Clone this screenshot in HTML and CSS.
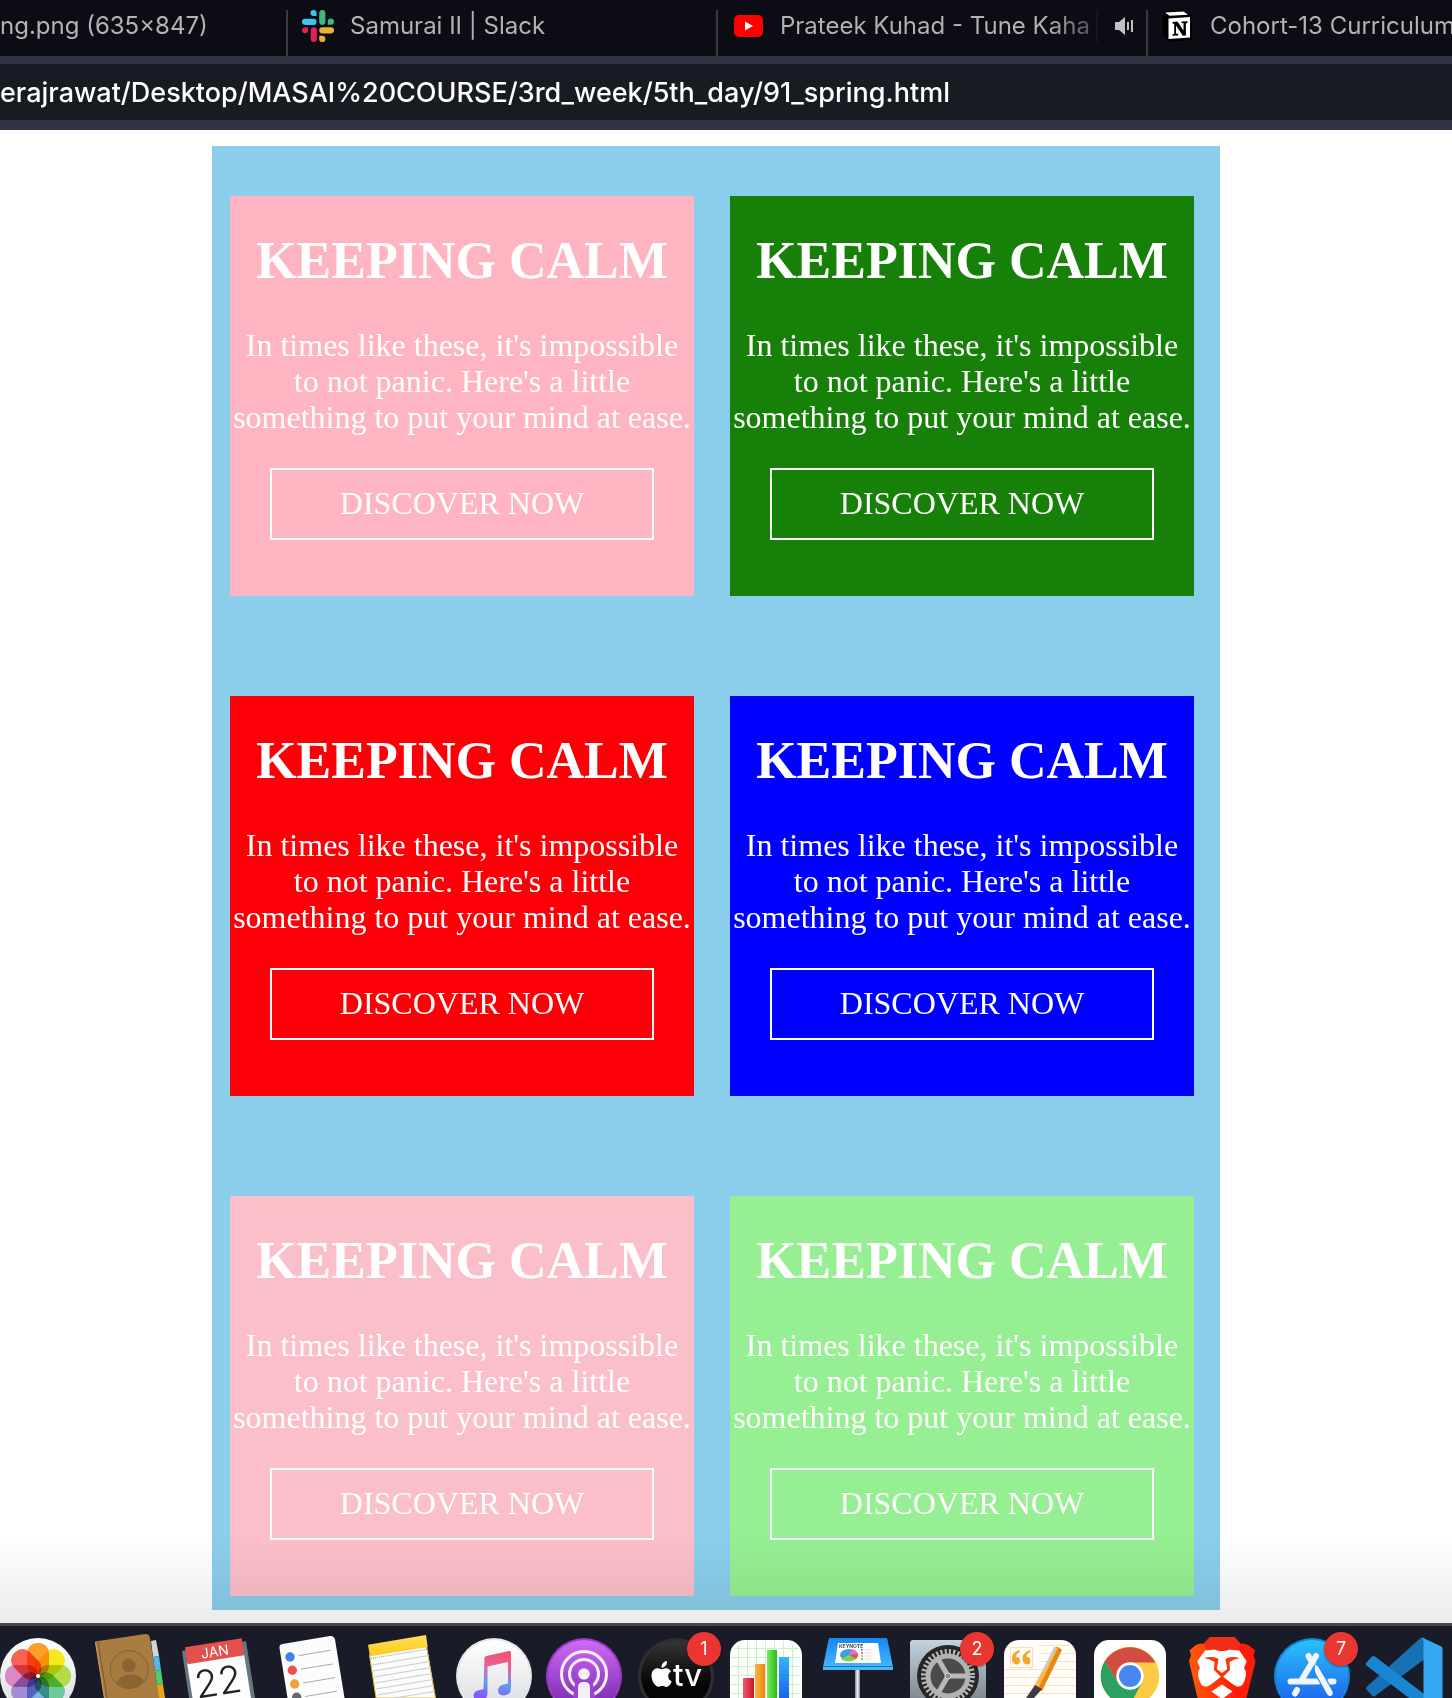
FILE: index.html
```html
<!DOCTYPE html>
<html lang="en">
<head>
<meta charset="utf-8">
<meta name="viewport" content="width=device-width, initial-scale=1">
<title>91_spring</title>
<link rel="stylesheet" href="styles.css">
</head>
<body>
<header class="browser">
  <nav class="tabs" aria-label="Open tabs">
    <a class="tab tab-first" href="#image"><span class="tab-title">ng.png (635×847)</span></a>
    <a class="tab" href="#slack">
      <svg class="tab-icon" viewBox="0 0 32 32" aria-hidden="true">
        <path fill="#3fc3f0" d="M11.500 0a3 3 0 0 1 3 3v3h-3a3 3 0 0 1 0-6zM3 8.700h8.500a3 3 0 0 1 0 6.200H3a3 3 0 0 1 0-6.200z"/>
        <path fill="#3cb883" d="M17.200 3a3 3 0 0 1 6.200 0v8.700a3 3 0 0 1-6.200 0zM32 11.700a3 3 0 0 1-3 3h-3.200v-3a3.100 3.100 0 0 1 6.200 0z"/>
        <path fill="#ebb22f" d="M29 17.200a3 3 0 0 1 0 6.200h-8.700a3 3 0 0 1 0-6.200zM20.300 32a3 3 0 0 1-3.100-3v-3.200h3.100a3.100 3.100 0 0 1 0 6.200z"/>
        <path fill="#e01e5a" d="M0 20.300a3 3 0 0 1 3-3.100h3.100v3.100a3.050 3.050 0 0 1-6.100 0zM8.700 20.300a3 3 0 0 1 6.200 0V29a3 3 0 0 1-6.200 0z"/>
      </svg>
      <span class="tab-title">Samurai II | Slack</span>
    </a>
    <a class="tab" href="#youtube">
      <svg class="tab-icon" viewBox="0 0 32 32" aria-hidden="true">
        <rect x="2" y="5" width="29" height="22" rx="5" fill="#fe0000"/>
        <path fill="#fff" d="M13 11.500l8 4.500-8 4.500z"/>
      </svg>
      <span class="tab-title tab-title-faded">Prateek Kuhad - Tune Kaha</span>
      <svg class="tab-sound" viewBox="0 0 20 20" aria-hidden="true">
        <path fill="#c0c1c4" d="M1 6h4l6-5v18l-6-5H1zM13 6h2v8h-2zM17 4h2v12h-2z"/>
      </svg>
    </a>
    <a class="tab tab-last" href="#notion">
      <svg class="tab-icon" viewBox="0 0 32 32" aria-hidden="true">
        <path fill="#000" d="M1 1.500L22 0l8 5v25l-23 1.500L1 24z"/>
        <path fill="#fff" d="M3 2.500L21.500 1.500 26 4.800 7.500 5.800zM6.500 8.500L28 7v20.500L6.500 29z"/>
        <path fill="#000" d="M10.500 12l5-.4 6 9v-7.300l-2-.4v-1.300l6-.4V13l-1.600.6v12l-3 .2-6.900-10.200v8l2.200.4v1.400l-5.700.4v-1.500l1.700-.6V13.800l-1.700-.3z"/>
      </svg>
      <span class="tab-title">Cohort-13 Curriculum</span>
    </a>
  </nav>
  <div class="toolbar">
    <input class="address" type="text" aria-label="Address" value="erajrawat/Desktop/MASAI%20COURSE/3rd_week/5th_day/91_spring.html">
  </div>
</header>

<main class="page">
  <div class="board">
    <section class="card card-rose"><h1>KEEPING CALM</h1><p>In times like these, it's impossible to not panic. Here's a little something to put your mind at ease.</p><button type="button">DISCOVER NOW</button></section>
    <section class="card card-green"><h1>KEEPING CALM</h1><p>In times like these, it's impossible to not panic. Here's a little something to put your mind at ease.</p><button type="button">DISCOVER NOW</button></section>
    <section class="card card-red"><h1>KEEPING CALM</h1><p>In times like these, it's impossible to not panic. Here's a little something to put your mind at ease.</p><button type="button">DISCOVER NOW</button></section>
    <section class="card card-blue"><h1>KEEPING CALM</h1><p>In times like these, it's impossible to not panic. Here's a little something to put your mind at ease.</p><button type="button">DISCOVER NOW</button></section>
    <section class="card card-pink"><h1>KEEPING CALM</h1><p>In times like these, it's impossible to not panic. Here's a little something to put your mind at ease.</p><button type="button">DISCOVER NOW</button></section>
    <section class="card card-mint"><h1>KEEPING CALM</h1><p>In times like these, it's impossible to not panic. Here's a little something to put your mind at ease.</p><button type="button">DISCOVER NOW</button></section>
  </div>
</main>

<footer class="dock">
  <!-- Photos -->
  <div class="app"><svg viewBox="0 0 76 72" aria-hidden="true">
    <defs><linearGradient id="disc" x2="0" y2="1"><stop stop-color="#fff"/><stop offset="1" stop-color="#d9dde1"/></linearGradient></defs>
    <circle cx="38" cy="50" r="38" fill="url(#disc)"/>
    <g class="petals">
      <rect x="27" y="17" width="22" height="33" rx="10" fill="#fb9f28"/>
      <rect x="27" y="17" width="22" height="33" rx="10" fill="#f8e71c" transform="rotate(45 38 50)"/>
      <rect x="27" y="17" width="22" height="33" rx="10" fill="#b2dc48" transform="rotate(90 38 50)"/>
      <rect x="27" y="17" width="22" height="33" rx="10" fill="#6ccb98" transform="rotate(135 38 50)"/>
      <rect x="27" y="17" width="22" height="33" rx="10" fill="#7fb0e6" transform="rotate(180 38 50)"/>
      <rect x="27" y="17" width="22" height="33" rx="10" fill="#a48cd2" transform="rotate(225 38 50)"/>
      <rect x="27" y="17" width="22" height="33" rx="10" fill="#d88bc0" transform="rotate(270 38 50)"/>
      <rect x="27" y="17" width="22" height="33" rx="10" fill="#fa6254" transform="rotate(315 38 50)"/>
    </g>
    <circle cx="38" cy="50" r="2" fill="#fff"/>
  </svg></div>
  <!-- Contacts -->
  <div class="app"><svg viewBox="0 0 76 72" aria-hidden="true">
    <path fill="#d3d5d8" d="M60 15l5-1 3 16-6 1z"/><path fill="#55b7e6" d="M62 31l6-1 2 14-6 1z"/><path fill="#4fcf62" d="M64 45l6-1 2 14-6 1z"/><path fill="#eaa11a" d="M66 59l6-1 2 14h-7z"/>
    <path fill="#a97c42" d="M4 15.500L54 8q4-.5 5 4l9 60H13z"/>
    <path fill="none" stroke="#7d5829" d="M7 16l9 56"/><path fill="none" stroke="#c99b5a" d="M4.500 16l9 56"/>
    <circle cx="38.300" cy="43.500" r="19" fill="#a67a40" stroke="#86612f"/>
    <circle cx="37.700" cy="39.500" r="6.800" fill="#8a6533"/><path fill="#8a6533" d="M25 57q4-8 14-8.500 9-.5 14 6-6 8-14 8t-14-5.500z"/>
  </svg></div>
  <!-- Calendar -->
  <div class="app"><svg viewBox="0 0 76 72" aria-hidden="true">
    <path fill="#687681" d="M0 25l4-1 8 48H7zM60 16l4-1 9 57h-6z"/>
    <path fill="#fdfdfd" d="M5 37l57-9 7 44H10.500z"/><path fill="#e4514d" d="M3 21.300l56.700-9 2.600 17-56.600 9z"/>
    <g transform="rotate(-9 34 30)" fill="#fff"><text class="cal-month" x="33.500" y="30.500" text-anchor="middle">JAN</text></g>
    <g transform="rotate(-9 38 68)"><text class="cal-day" x="38" y="69" text-anchor="middle">22</text></g>
  </svg></div>
  <!-- Reminders -->
  <div class="app"><svg viewBox="0 0 76 72" aria-hidden="true">
    <path fill="#fcfcfc" d="M6.500 22q-.5-3.500 3-4L57 10q4-.5 5 3.500L71.500 72H14.500z"/>
    <circle cx="17" cy="31" r="4.700" fill="#3f80f0"/><circle cx="19.300" cy="44.300" r="4.700" fill="#e9534b"/><circle cx="21.700" cy="58" r="4.700" fill="#eda03c"/><circle cx="23.700" cy="71.300" r="4.700" fill="#636a73"/>
    <path stroke="#aaa" d="M25.500 29.700l32-5.400M28 43l32-5M30 57l32-5.400M32 70.500l32-5.400"/>
  </svg></div>
  <!-- Notes -->
  <div class="app"><svg viewBox="0 0 76 72" aria-hidden="true">
    <path fill="#fcfcfa" stroke="#d8b93c" d="M5.500 29l57-9L71.500 72H12z"/>
    <defs><linearGradient id="notes" x2="0" y2="1"><stop stop-color="#ffe05a"/><stop offset="1" stop-color="#fbc91c"/></linearGradient></defs>
    <path fill="url(#notes)" d="M4 18.700L62 9l1.700 12L6 30.300z"/>
    <path stroke="#999" stroke-dasharray="1 1" d="M7 32.500l57-9.500"/>
    <path stroke="#c9cbd0" d="M8 39l57-9.500M9 45l57-9.500M10 51l57-9.500M11 57l57-9.500M12 63l57-9.500M13 69l57-9.500M25 73l45-7.500"/>
  </svg></div>
  <!-- Music -->
  <div class="app"><svg viewBox="0 0 76 72" aria-hidden="true">
    <defs><linearGradient id="note" gradientUnits="userSpaceOnUse" x1="46" y1="25" x2="38" y2="72"><stop stop-color="#f4506c"/><stop offset=".35" stop-color="#e8629a"/><stop offset=".7" stop-color="#5c9cf8"/><stop offset="1" stop-color="#8a58f5"/></linearGradient></defs>
    <circle cx="39" cy="50" r="38" fill="#e3e5e8"/><circle cx="39" cy="50" r="36" fill="url(#disc)"/>
    <path fill="url(#note)" d="M29.500 32q0-1.500 2-2L54 25q2-.3 2 1.500V62q0 7-7 7.500-6 0-6-5 0-5 6-6l4-1V36l-20.500 4.500V67q0 7-7 7.500-6.500.5-7-4.500 0-5 6-6l4-1z"/>
  </svg></div>
  <!-- Podcasts -->
  <div class="app"><svg viewBox="0 0 76 72" aria-hidden="true">
    <defs><linearGradient id="pod" x2="0" y2="1"><stop stop-color="#cf6af5"/><stop offset="1" stop-color="#7524ae"/></linearGradient></defs>
    <circle cx="38" cy="50" r="38" fill="#9939c6"/><circle cx="38" cy="50" r="36" fill="url(#pod)"/>
    <g fill="none" stroke="#f4f0f6" stroke-width="3"><circle cx="38" cy="48" r="22.500"/><circle cx="38" cy="48" r="14.500"/></g>
    <path fill="#a042d1" d="M29 58q2-6 9-6t9 6l2 14H27z"/>
    <circle cx="38" cy="48" r="5.800" fill="#f4f0f6"/><rect x="32" y="56" width="12" height="25" rx="5" fill="#f4f0f6"/>
  </svg></div>
  <!-- TV -->
  <div class="app"><svg viewBox="0 0 76 72" aria-hidden="true">
    <defs><linearGradient id="tv" x2="0" y2="1"><stop stop-color="#353535"/><stop offset=".6" stop-color="#060606"/></linearGradient></defs>
    <circle cx="39" cy="50" r="38" fill="#2f2f30"/><circle cx="39" cy="50" r="35" fill="url(#tv)"/>
    <path fill="#fff" d="M30 35q.3 3-1.600 5-1.800 2-4 1.800-.2-2.700 1.600-4.700 1.700-1.900 4-2.100zM34 45.500q-3 1.800-2.800 5 .2 3.500 3.500 4.800-2 5.200-5 5.600-1.400 0-2.600-.7-1.900-.8-3.800 0-1.500.8-2.700.5-5-2.500-6-9.500-.6-5.500 2.500-7.800 2.800-1.900 5.600-.6 2 .8 3.600 0 4.800-2 7.700 2.700z"/>
    <text class="tv-word" x="36" y="59.500">tv</text>
  </svg><span class="badge">1</span></div>
  <!-- Numbers -->
  <div class="app"><svg viewBox="0 0 76 72" aria-hidden="true">
    <defs>
      <linearGradient id="b1"><stop stop-color="#ef5a6a"/><stop offset="1" stop-color="#c41632"/></linearGradient><linearGradient id="b2"><stop stop-color="#fdb640"/><stop offset="1" stop-color="#e88410"/></linearGradient>
      <linearGradient id="b3"><stop stop-color="#7cea58"/><stop offset="1" stop-color="#25bb1e"/></linearGradient><linearGradient id="b4" x2="0" y2="1"><stop stop-color="#2eb8fa"/><stop offset="1" stop-color="#1c62ee"/></linearGradient>
    </defs>
    <rect x="2" y="14" width="72" height="72" rx="15" fill="#fdfffd"/>
    <path stroke="#c9f0c9" d="M10.500 19v53M19.500 15v57M28.500 15v57M37.500 15v57M46.500 15v57M55.500 15v57M64.500 18v54M6 22.500h64M3 31.500h70M3 40.500h70M3 49.500h70M3 58.500h70M3 67.500h70"/>
    <path fill="url(#b1)" d="M15 52h11v20H15z"/><path fill="url(#b2)" d="M27 38h10v34H27z"/><path fill="url(#b3)" d="M39 24h10v48H39z"/><path fill="url(#b4)" d="M51 31h10v41H51z"/>
  </svg></div>
  <!-- Keynote -->
  <div class="app"><svg viewBox="0 0 76 72" aria-hidden="true">
    <defs><linearGradient id="key" x2="0" y2="1"><stop stop-color="#1687f5"/><stop offset="1" stop-color="#4ab9fb"/></linearGradient><linearGradient id="pole"><stop stop-color="#7d858e"/><stop offset=".5" stop-color="#eef1f5"/><stop offset="1" stop-color="#7d858e"/></linearGradient></defs>
    <path fill="url(#pole)" d="M36 42h5v30h-5z"/><path fill="url(#key)" d="M11 12h56q1 0 1.300 1L74 41v3H4v-3l5.700-28q.3-1 1.300-1z"/><path fill="#1278b8" d="M4 40h70v1H4z"/>
    <path fill="#fff" d="M19 17h40l3 20H16z"/><text class="keynote-word" x="20" y="22">KEYNOTE</text>
    <ellipse cx="30" cy="29" rx="9" ry="6" fill="#3aa0ea"/><path fill="#e36ed2" d="M30 29l2-6q5 .5 7 5z"/><path fill="#ee5048" d="M30 29l9-1q0 3-2 5z"/><path fill="#83cf4c" d="M30 29l7 4q-8 5-15 0z"/>
    <path fill="#4aaee8" d="M42 23h2v2h-2z"/><path fill="#e36ed2" d="M42 26h2v2h-2z"/><path fill="#f5ba39" d="M42 29h2v2h-2z"/><path fill="#83cf4c" d="M42 32h2v2h-2z"/><path stroke="#d6d8dc" d="M45.500 24h7M45.500 27h7M45.500 30h7M45.500 33h8"/>
  </svg></div>
  <!-- System preferences -->
  <div class="app"><svg viewBox="0 0 76 72" aria-hidden="true">
    <defs><linearGradient id="sys" x2="0" y2="1"><stop stop-color="#c3d3df"/><stop offset="1" stop-color="#70757b"/></linearGradient></defs>
    <rect y="14" width="76" height="74" rx="3" fill="url(#sys)"/><circle cx="38" cy="50" r="31" fill="#252628"/>
    <circle cx="38" cy="50" r="24.500" fill="none" stroke="#b5b5b3" stroke-width="5" stroke-dasharray="2.200 2.080"/>
    <circle cx="38" cy="50" r="20" fill="#4b4b4b" stroke="#b2b2b0" stroke-width="5"/>
    <path stroke="#b8b8b6" stroke-width="5" d="M38 50h20M38 50L28 32.700M38 50L28 67.300"/><circle cx="38" cy="50" r="3" fill="#8b8c8d" stroke="#d1d1d0"/>
  </svg><span class="badge">2</span></div>
  <!-- Pages -->
  <div class="app"><svg viewBox="0 0 76 72" aria-hidden="true">
    <rect x="3" y="14" width="72" height="72" rx="15" fill="#fffefb"/>
    <path stroke="#fbdfbb" d="M38 19.500h31M38 27.500h36M38 35.500h36M4 43.500h70M4 51.500h70M4 59.500h70M4 67.500h70"/><path fill="none" stroke="#fbdcb7" d="M9.500 21.500h22v20h-22z"/>
    <path fill="#f6a52e" d="M19 24v2q-4 1.500-4 5 4-.5 4 4 0 3.500-3.700 3.500-4.300-.5-4.300-6 0-6.500 8-8.500zM29.500 24v2q-4 1.500-4 5 4-.5 4 4 0 3.500-3.700 3.500-4.300-.5-4.300-6 0-6.500 8-8.500z"/>
    <path fill="#e8860e" d="M54 21q3-1 7 3L41 65l-8-4z"/><path fill="#ffb74a" d="M54 21l3 1-20 41-4-2z"/><path fill="#b9d2e0" d="M53 21l2 1-12 24-2-1z"/><path fill="#3c3d42" d="M34 59l7 4-8 9h-8z"/>
  </svg></div>
  <!-- Chrome -->
  <div class="app"><svg viewBox="0 0 76 72" aria-hidden="true">
    <rect x="2" y="14" width="72" height="72" rx="15" fill="#fff"/>
    <circle cx="38" cy="50" r="29.300" fill="#fdcb43"/>
    <path fill="#d34c42" d="M12.700 35.300A29.300 29.300 0 0 1 63.300 36.500H38L26.300 56.700z"/>
    <path fill="#2aa15e" d="M12.700 35.300L26.300 56.700 38 63.500 49.700 56.700 38 79.300A29.300 29.300 0 0 1 12.700 35.300z"/>
    <circle cx="38" cy="50" r="13.700" fill="#fff"/><circle cx="38" cy="50" r="11" fill="#4a86f0"/>
  </svg></div>
  <!-- Brave -->
  <div class="app"><svg viewBox="0 0 76 72" aria-hidden="true">
    <defs><linearGradient id="brave"><stop stop-color="#ff5a0a"/><stop offset=".7" stop-color="#ff1c08"/></linearGradient></defs>
    <path fill="url(#brave)" d="M27 11h24.500l6 6.700q4-1 8 1.600l6.500 5-1.500 5 2 6L63.500 72h-49L6 35.300l2-6-1.500-5 6-5q4-2.500 8-1.600z"/>
    <path fill="#f22c18" d="M27 11h24.500l6 6.700-3.500 6q-7-1-8-1-7 3-14 0-1 0-8 1l-3.500-6z"/>
    <path fill="#fff" d="M22 24.500Q29 24 31 23.500q8 3.500 16 0 2 .5 9.300 1l7.400 10.800L61 42q3.500 5 1 11-2 8-7 7.500-3 0-10-6L39 50l-6 4.500q-7 6-10 6-5 .5-7-7.500-2.500-6 1-11l-2.700-6.700z"/>
    <path fill="#fb3409" d="M21 32Q31 29.500 35.500 33l-1.700 10 5.200 4 5.200-4-1.700-10Q47 29.500 57 32q-6 1-10.500 4l.500 8-8 8-8-8 .5-8Q27 33 21 32z"/>
    <path fill="#fff" d="M39 58.500l10.500 7L39 73l-10.500-7.500z"/>
  </svg></div>
  <!-- App Store -->
  <div class="app"><svg viewBox="0 0 76 72" aria-hidden="true">
    <defs><linearGradient id="store" x2="0" y2="1"><stop stop-color="#29c2fc"/><stop offset="1" stop-color="#1b58e8"/></linearGradient></defs>
    <circle cx="38" cy="50" r="38" fill="#1284df"/><circle cx="38" cy="50" r="36" fill="url(#store)"/>
    <g stroke="#f3f4f7" stroke-width="6" stroke-linecap="round" fill="none"><path d="M34.500 30l4 7M42 30L27 55M23 64l-2 3.500M16.500 55.500h28M56 55.500h3.500"/></g>
    <path stroke="#2389f4" stroke-width="8" d="M42 42l10 18"/>
    <path fill="#f3f4f7" d="M41.500 39q2 0 3.500 3l13.500 23.500q1 3-1.300 4.200-2.500 1-4.200-1.700L41.500 47q-1.500-5 0-8z"/>
  </svg><span class="badge">7</span></div>
  <!-- VS Code -->
  <div class="app"><svg viewBox="0 0 76 72" aria-hidden="true">
    <path fill="#1672b5" d="M55 12.500q2-1.500 4-.5v21.500L10 70q-1 1-2.500 0l-6-6.500q-1-1.500 0-2.500z"/>
    <path fill="#1986d2" d="M7 30.500q1.500-1 3 0L59 68v4H44L1.500 39.500q-1.500-1.500 0-3z"/>
    <path fill="#33a9f2" d="M57 11.500l18.500 8.500q2 1 2 3v49H58.500V15z"/>
  </svg></div>
</footer>
</body>
</html>
```
FILE: styles.css
```css
* { box-sizing: border-box; }

body {
  display: flex;
  flex-direction: column;
  min-height: 100vh;
  margin: 0;
  background: #fff;
  overflow-x: hidden;
}

/* Browser bar */
.browser { font-family: Inter, "Liberation Sans", sans-serif; }

.tabs {
  display: flex;
  height: 56px;
  padding-top: 10px;
  background: #0c0c15;
  overflow: hidden;
}

.tab {
  display: flex;
  flex: 0 0 430px;
  align-items: center;
  gap: 16px;
  padding: 0 12px 14px 14px;
  border-left: 2px solid #3a3a3c;
  color: #b3b3b6;
  font-size: 24px;
  line-height: 32px;
  text-decoration: none;
  white-space: nowrap;
}

.tab-first {
  flex-basis: 286px;
  padding-left: 0;
  border-left: 0;
}

.tab-last { flex: 1 0 auto; }

.tab-icon { flex: none; width: 32px; height: 32px; }

.tab-title-faded {
  flex: 1;
  overflow: hidden;
  border-right: 2px solid #16161f;
  background: linear-gradient(90deg, #b3b3b6 85%, #54555c 98%);
  background-clip: text;
  color: transparent;
}

.tab-sound { flex: none; width: 20px; height: 20px; }

.toolbar {
  padding: 8px 0 10px;
  background: #313342;
}

.address {
  display: block;
  width: 100%;
  height: 56px;
  padding: 0;
  border: 0;
  background: #191b22;
  color: #fff;
  font-family: inherit;
  font-size: 27px;
  font-weight: 500;
}

/* Page */
.page {
  position: relative;
  display: flex;
  flex: 1;
  justify-content: center;
  align-items: flex-start;
  padding: 16px 20px 13px 0;
  font-family: "Liberation Serif", "Times New Roman", serif;
}

/* Shadow cast by the dock */
.page::after {
  content: "";
  position: absolute;
  right: 0;
  bottom: 0;
  left: 0;
  height: 90px;
  background: linear-gradient(rgba(0, 0, 0, 0), rgba(0, 0, 0, 0.08));
  pointer-events: none;
}

.board {
  display: grid;
  grid-template-columns: 464px 464px;
  gap: 100px 36px;
  padding: 50px 26px 14px 18px;
  background: #8bceeb;
}

.card {
  padding: 35px 0 56px;
  color: #fff;
  font-size: 32px;
  line-height: 36px;
  text-align: center;
}

.card h1 {
  margin: 0 0 36px;
  font-size: 52px;
  line-height: 60px;
}

.card p { margin: 0 0 33px; }

.card button {
  display: block;
  width: 384px;
  margin: 0 auto;
  padding: 15px 16px 17px;
  border: 2px solid #fff;
  background: transparent;
  color: inherit;
  font: inherit;
}

.card-rose { background: #ffb5c1; }
.card-green { background: #178008; }
.card-red { background: #fd0007; }
.card-blue { background: #0000ff; }
.card-pink { background: #fbbfca; }
.card-mint { background: #96ef92; }

/* Dock */
.dock {
  display: flex;
  gap: 15px;
  border-top: 3px solid #45474e;
  background: #191c28;
  overflow: hidden;
  font-family: Inter, "Liberation Sans", sans-serif;
}

.app { position: relative; flex: none; width: 76px; }

.app svg {
  display: block;
  width: 76px;
  height: 72px;
  overflow: visible;
}

.petals { isolation: isolate; }
.petals rect { mix-blend-mode: multiply; }

.cal-month { font-size: 14px; }
.cal-day { fill: #222; font-size: 38px; font-weight: 300; }
.tv-word { fill: #fff; font-size: 31px; font-weight: 500; }
.keynote-word { fill: #444; font-size: 5px; font-weight: 700; }

.badge {
  position: absolute;
  top: 6px;
  left: 50px;
  width: 34px;
  height: 34px;
  border-radius: 50%;
  background: #ea3631;
  box-shadow: 0 1px 2px rgba(0, 0, 0, 0.4);
  color: #fff;
  font-size: 18px;
  line-height: 34px;
  text-align: center;
}
```
